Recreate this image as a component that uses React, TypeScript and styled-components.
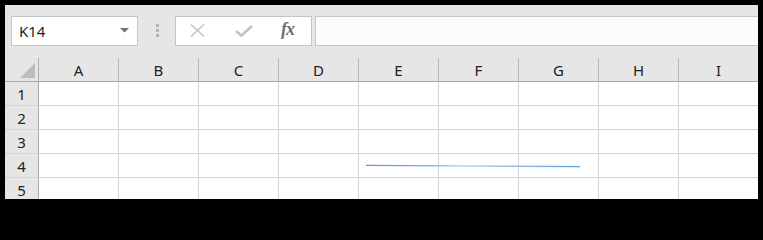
import React from "react";
import styled, { createGlobalStyle } from "styled-components";

const GlobalStyle = createGlobalStyle`
  html, body {
    margin: 0;
    padding: 0;
    background: #000;
  }
  body {
    font-family: "Noto Sans", "Open Sans", sans-serif;
  }
`;

const columns = ["A", "B", "C", "D", "E", "F", "G", "H", "I"];
const rows = [1, 2, 3, 4, 5];

const Frame = styled.div`
  width: 763px;
  height: 205px;
  box-sizing: border-box;
  padding: 5px 5px 6px 5px;
  background: #000;
  overflow: hidden;
`;

const Window = styled.div`
  display: flex;
  flex-direction: column;
  height: 100%;
  background: #e6e6e6;
  overflow: hidden;
  position: relative;
`;

const Toolbar = styled.div`
  display: flex;
  align-items: center;
  height: 53px;
  box-sizing: border-box;
  padding: 11px 0 13px 6px;
  flex-shrink: 0;
`;

const NameBox = styled.div`
  display: flex;
  align-items: center;
  justify-content: space-between;
  width: 127px;
  height: 30px;
  box-sizing: border-box;
  padding: 0 8px 0 7px;
  background: #fff;
  border: 1px solid #c6c6c6;
  font-size: 15px;
  color: #1e1e1e;
`;

const Grip = styled.div`
  display: flex;
  flex-direction: column;
  gap: 2px;
  margin: 0 16px 0 18px;
  span {
    width: 3px;
    height: 3px;
    background: #b3b3b3;
  }
`;

const FuncBox = styled.div`
  display: flex;
  align-items: center;
  width: 137px;
  height: 30px;
  box-sizing: border-box;
  padding: 0 0 0 14px;
  background: #fff;
  border: 1px solid #c6c6c6;
`;

const IconSlot = styled.span<{ $gap: number }>`
  display: flex;
  align-items: center;
  margin-left: ${(p) => p.$gap}px;
`;

const Fx = styled.span`
  font-family: "Liberation Serif", "DejaVu Serif", serif;
  font-style: italic;
  font-weight: bold;
  font-size: 18px;
  color: #6e6e6e;
  letter-spacing: -1px;
  margin-left: 28px;
  margin-top: -2px;
`;

const FormulaBar = styled.div`
  flex: 1;
  height: 30px;
  margin-left: 3px;
  margin-right: -4px;
  box-sizing: border-box;
  background: #fcfcfc;
  border: 1px solid #c6c6c6;
`;

const Grid = styled.div`
  display: grid;
  grid-template-columns: 34px repeat(9, 80px);
  grid-auto-rows: 24px;
  background: #fff;
  flex: 1;
  overflow: hidden;
`;

const Corner = styled.div`
  background: #e6e6e6;
  border-right: 1px solid #ababab;
  border-bottom: 1px solid #ababab;
  box-sizing: border-box;
  display: flex;
  align-items: flex-end;
  justify-content: flex-end;
  padding: 0 3px 3px 0;
`;

const ColHeader = styled.div`
  background: #e6e6e6;
  border-right: 1px solid #b6b6b6;
  border-bottom: 1px solid #ababab;
  box-sizing: border-box;
  display: flex;
  align-items: center;
  justify-content: center;
  font-size: 15px;
  color: #222;
  padding-top: 1px;
`;

const RowHeader = styled.div`
  background: #e6e6e6;
  border-right: 1px solid #ababab;
  border-bottom: 1px solid #d4d4d4;
  box-sizing: border-box;
  display: flex;
  align-items: center;
  justify-content: center;
  font-size: 15px;
  color: #222;
  padding-top: 1px;
`;

const Cell = styled.div`
  border-right: 1px solid #d4d4d4;
  border-bottom: 1px solid #d4d4d4;
  box-sizing: border-box;
  background: #fff;
`;

const LineOverlay = styled.svg`
  position: absolute;
  left: 0;
  top: 0;
  pointer-events: none;
`;

export default function App() {
  return (
    <>
      <GlobalStyle />
      <Frame>
        <Window>
          <Toolbar>
            <NameBox>
              <span>K14</span>
              <svg width="9" height="5" viewBox="0 0 9 5">
                <path d="M0 0 L9 0 L4.5 4.5 Z" fill="#707070" />
              </svg>
            </NameBox>
            <Grip>
              <span />
              <span />
              <span />
            </Grip>
            <FuncBox>
              <IconSlot $gap={0}>
                <svg width="15" height="13" viewBox="0 0 15 13">
                  <path d="M1 0.5 L14 12.5 M14 0.5 L1 12.5" stroke="#c3c3c3" strokeWidth="1.5" fill="none" />
                </svg>
              </IconSlot>
              <IconSlot $gap={30}>
                <svg width="18" height="12" viewBox="0 0 18 12">
                  <path d="M1 6 L6.5 10.5 L17 1" stroke="#c3c3c3" strokeWidth="2.6" fill="none" />
                </svg>
              </IconSlot>
              <Fx>fx</Fx>
            </FuncBox>
            <FormulaBar />
          </Toolbar>
          <Grid>
            <Corner>
              <svg width="15" height="15" viewBox="0 0 15 15">
                <path d="M0 15 L15 15 L15 0 Z" fill="#bdbdbd" />
              </svg>
            </Corner>
            {columns.map((c) => (
              <ColHeader key={c}>{c}</ColHeader>
            ))}
            {rows.map((r) => (
              <React.Fragment key={r}>
                <RowHeader>{r}</RowHeader>
                {columns.map((c) => (
                  <Cell key={c + r} />
                ))}
              </React.Fragment>
            ))}
          </Grid>
          <LineOverlay width="753" height="194">
            <defs>
              <linearGradient id="ln" x1="0" x2="1" y1="0" y2="0">
                <stop offset="0" stopColor="#5b9bd5" />
                <stop offset="0.3" stopColor="#7fb1e0" />
                <stop offset="0.45" stopColor="#b4d2ef" />
                <stop offset="0.7" stopColor="#8dbbe6" />
                <stop offset="1" stopColor="#5b9bd5" />
              </linearGradient>
            </defs>
            <path d="M361 160.3 L575 161.7" stroke="url(#ln)" strokeWidth="1.3" fill="none" />
          </LineOverlay>
        </Window>
      </Frame>
    </>
  );
}
